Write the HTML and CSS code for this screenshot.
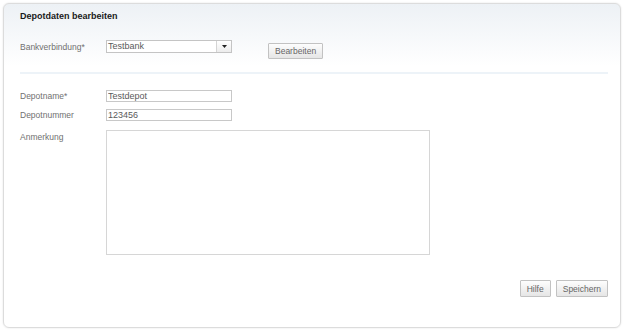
FILE: index.html
```html
<!DOCTYPE html>
<html lang="de">
<head>
    <meta charset="UTF-8">
    <title>Depotdaten bearbeiten</title>
    <link rel="stylesheet" href="styles.css">
</head>
<body>
    <div class="panel">
        <h2 class="panel-title">Depotdaten bearbeiten</h2>

        <div class="form-row bank-row">
            <label class="form-label">Bankverbindung*</label>
            <div class="select">
                <span class="select-value">Testbank</span>
                <span class="select-arrow">
                    <svg width="5" height="3" viewBox="0 0 5 3"><path d="M0 0h5L2.5 3z" fill="#222"/></svg>
                </span>
            </div>
            <button class="btn edit-btn">Bearbeiten</button>
        </div>

        <div class="separator"></div>

        <div class="form-row">
            <label class="form-label">Depotname*</label>
            <input class="text-input" type="text" value="Testdepot">
        </div>
        <div class="form-row">
            <label class="form-label">Depotnummer</label>
            <input class="text-input" type="text" value="123456">
        </div>
        <div class="form-row note-row">
            <label class="form-label">Anmerkung</label>
            <textarea class="note-input"></textarea>
        </div>

        <div class="panel-footer">
            <button class="btn">Hilfe</button>
            <button class="btn">Speichern</button>
        </div>
    </div>
</body>
</html>
```

FILE: styles.css
```css
* {
    box-sizing: border-box;
    font-family: "Liberation Sans", Arial, sans-serif;
}

body {
    margin: 0;
    background-color: #fff;
}

.panel {
    display: flex;
    flex-direction: column;
    margin: 3px;
    width: 618px;
    height: 325px;
    padding: 0 12px 0 16px;
    border: 1px solid #dcdcdc;
    border-radius: 6px;
    background: linear-gradient(#edf1f5, #fff 62px);
    box-shadow: 0 0 2px rgba(0,0,0,0.12);
}

.panel-title {
    margin: 6px 0 0;
    font-size: 9px;
    line-height: 13px;
    font-weight: bold;
    color: #1a1a1a;
}

.form-row {
    display: flex;
    align-items: center;
    margin-top: 7px;
}

.form-label {
    width: 86px;
    flex-shrink: 0;
    font-size: 8.5px;
    line-height: 12px;
    color: #707070;
}

.bank-row {
    align-items: flex-start;
    margin-top: 17px;
}

.bank-row .form-label {
    padding-top: 1px;
}

.select {
    display: flex;
    width: 126px;
    height: 13px;
    border: 1px solid #c4c4c4;
    background-color: #fff;
}

.select-value {
    flex: 1;
    padding-left: 1px;
    font-size: 9px;
    line-height: 11px;
    color: #5a5a5a;
}

.select-arrow {
    display: flex;
    align-items: center;
    justify-content: center;
    width: 15px;
    border-left: 1px solid #d4d4d4;
    background: linear-gradient(#fff, #ececec);
}

.select-arrow svg {
    display: block;
}

.btn {
    height: 16px;
    padding: 0 6px;
    border: 1px solid #c2c2c2;
    border-radius: 1px;
    background: linear-gradient(#fdfdfd, #e6e6e6);
    font-size: 8.5px;
    line-height: 14px;
    color: #666;
    cursor: pointer;
}

.edit-btn {
    margin: 3px 0 0 36px;
}

.separator {
    height: 2px;
    margin-top: 13px;
    background-color: #edf3f8;
}

.separator + .form-row {
    margin-top: 16px;
}

.text-input {
    width: 126px;
    height: 12px;
    padding: 0 1px;
    border: 1px solid #c8c8c8;
    font-size: 9px;
    line-height: 10px;
    color: #5a5a5a;
    outline: none;
}

.note-row {
    align-items: flex-start;
    margin-top: 9px;
}

.note-row .form-label {
    padding-top: 1px;
}

.note-input {
    width: 324px;
    height: 125px;
    border: 1px solid #d6d6d6;
    resize: none;
    outline: none;
}

.panel-footer {
    display: flex;
    justify-content: flex-end;
    gap: 5px;
    margin-top: 25px;
}

.panel-footer .btn {
    height: 17px;
}
```
